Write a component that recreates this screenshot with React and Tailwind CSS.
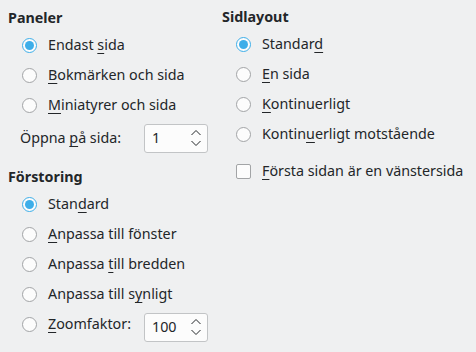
import React from 'react';

function M({ children }) {
  return <span className="underline decoration-1 underline-offset-[3px]">{children}</span>;
}

function Radio({ checked, children }) {
  return (
    <div className="flex items-center h-[30px] pl-[14px]">
      <span
        className={
          checked
            ? "w-[15px] h-[15px] rounded-full border border-[#3daee9] bg-[#fcfcfc] flex items-center justify-center shrink-0"
            : "w-[15px] h-[15px] rounded-full border border-[#a2a4a6] bg-[#fcfcfc] shrink-0"
        }
      >
        {checked && <span className="w-[9px] h-[9px] rounded-full bg-[#3daee9]" />}
      </span>
      <span className="ml-[11px] whitespace-nowrap">{children}</span>
    </div>
  );
}

function Check({ children }) {
  return (
    <div className="flex items-center h-[30px] pl-[14px]">
      <span className="w-[15px] h-[15px] rounded-[2px] border border-[#a2a4a6] bg-[#fcfcfc] shrink-0" />
      <span className="ml-[11px] whitespace-nowrap">{children}</span>
    </div>
  );
}

function Spin({ value }) {
  return (
    <div className="w-[64px] h-[29px] rounded-[3px] border border-[#c2c4c6] bg-[#fcfcfc] flex items-center pl-[7px] pr-[5px]">
      <span className="flex-1">{value}</span>
      <svg width="12" height="20" viewBox="0 0 12 20" fill="none" stroke="#232629" strokeWidth="1">
        <path d="M1.5 7 L6 2.5 L10.5 7" />
        <path d="M1.5 13 L6 17.5 L10.5 13" />
      </svg>
    </div>
  );
}

export default function App() {
  return (
    <div
      className="w-[476px] h-[352px] bg-[#eff0f1] text-[#232629] text-[14.3px] flex"
      style={{ fontFamily: '"Noto Sans", sans-serif' }}
    >
      {/* Left column */}
      <div className="w-[214px] pl-[8px] pt-[6px] flex flex-col">
        <div className="h-6 flex items-center font-bold">Paneler</div>
        <Radio checked>Endast <M>s</M>ida</Radio>
        <Radio><M>B</M>okmärken och sida</Radio>
        <Radio><M>M</M>iniatyrer och sida</Radio>
        <div className="mt-[3px] h-[30px] flex items-center pl-[12px]">
          <span className="w-[124px] whitespace-nowrap">Öppna <M>p</M>å sida:</span>
          <Spin value="1" />
        </div>
        <div className="mt-[12px] h-6 flex items-center font-bold">Förstoring</div>
        <Radio checked>Stan<M>d</M>ard</Radio>
        <Radio><M>A</M>npassa till fönster</Radio>
        <Radio>Anpassa <M>t</M>ill bredden</Radio>
        <Radio>Anpassa till s<M>y</M>nligt</Radio>
        <div className="flex items-center h-[30px] pl-[14px]">
          <span className="w-[15px] h-[15px] rounded-full border border-[#a2a4a6] bg-[#fcfcfc] shrink-0" />
          <span className="ml-[11px] w-[96px] whitespace-nowrap"><M>Z</M>oomfaktor:</span>
          <div className="mt-[6px]">
            <Spin value="100" />
          </div>
        </div>
      </div>

      {/* Right column */}
      <div className="pl-[8px] pt-[5px] flex flex-col">
        <div className="h-6 flex items-center font-bold">Sidlayout</div>
        <Radio checked>Standar<M>d</M></Radio>
        <Radio><M>E</M>n sida</Radio>
        <Radio><M>K</M>ontinuerligt</Radio>
        <Radio>Kontin<M>u</M>erligt motstående</Radio>
        <div className="mt-[7px]">
          <Check><M>F</M>örsta sidan är en vänstersida</Check>
        </div>
      </div>
    </div>
  );
}
